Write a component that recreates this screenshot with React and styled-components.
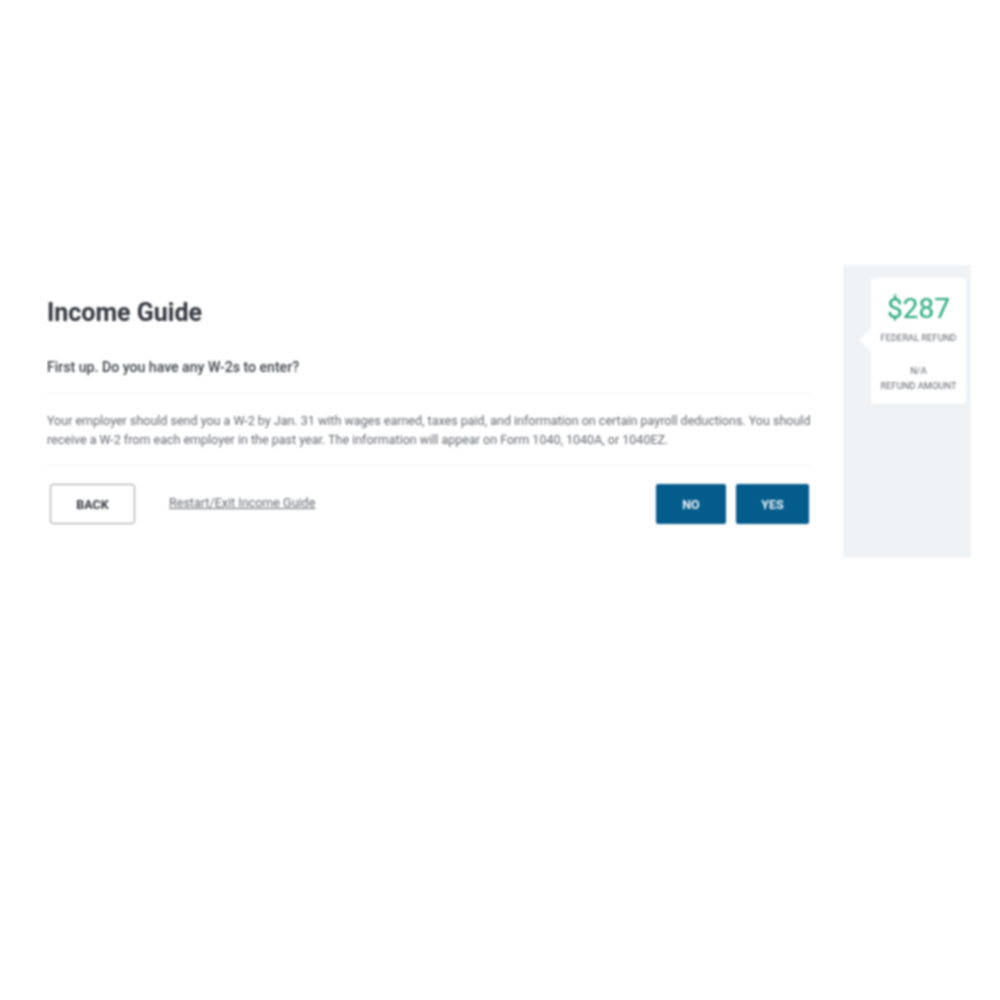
import React from "react";
import styled, { createGlobalStyle } from "styled-components";

const Global = createGlobalStyle`
  html, body { margin: 0; padding: 0; background: #fff; }
  body { font-family: Roboto, "Liberation Sans", sans-serif; }
`;
const Page = styled.div`
  width: 1000px;
  height: 1000px;
  padding: 265px 29px 0 16px;
  box-sizing: border-box;
  filter: blur(0.8px);
`;
const Panel = styled.div`
  display: flex;
  height: 293px;
`;
const Main = styled.main`
  flex: 1;
  padding: 33px 33px 0 31px;
  min-width: 0;
`;
const Title = styled.h1`
  margin: 0;
  font-size: 25px;
  line-height: 30px;
  font-weight: 700;
  color: #34373f;
`;
const Question = styled.p`
  margin: 29px 0 0;
  font-size: 14.1px;
  line-height: 20px;
  font-weight: 500;
  color: #3e4147;
`;
const Rule = styled.hr`
  border: 0;
  border-top: 1px solid #f2f2f2;
  margin: 0;
`;
const FirstRule = styled(Rule)`
  margin-top: 16px;
`;
const Description = styled.p`
  margin: 17px -6px 16px 0;
  font-size: 12.5px;
  line-height: 19px;
  color: #66686e;
`;
const Actions = styled.div`
  display: flex;
  align-items: center;
  margin-top: 18px;
  padding: 0 1px 0 3px;
`;
const BackButton = styled.button`
  width: 85px;
  height: 40px;
  box-sizing: border-box;
  background: #fff;
  border: 1.5px solid #9a9c9f;
  border-radius: 3px;
  font: 700 12.5px Roboto, sans-serif;
  color: #34373f;
`;
const ExitLink = styled.a`
  margin: 0 0 3px 34px;
  font-size: 12.55px;
  color: #66686e;
  text-decoration: underline;
`;
const Choices = styled.div`
  margin-left: auto;
  display: flex;
  gap: 10px;
`;
const Choice = styled.button`
  width: ${(p) => p.$width}px;
  height: 40px;
  border: 0;
  border-radius: 2px;
  background: #045c8c;
  color: #eef4f7;
  font: 700 12.5px Roboto, sans-serif;
`;
const Sidebar = styled.aside`
  width: 128px;
  background: #f0f3f5;
  padding: 13px 5px 0 28px;
  box-sizing: border-box;
`;
const RefundCard = styled.div`
  position: relative;
  height: 126px;
  background: #fff;
  border-radius: 3px;
  box-shadow: 0 1px 3px rgba(0, 0, 0, 0.04);
  text-align: center;
  padding-top: 14px;
  box-sizing: border-box;
  &::before {
    content: "";
    position: absolute;
    left: -8px;
    top: 54px;
    width: 16px;
    height: 16px;
    background: #fff;
    transform: rotate(45deg);
  }
`;
const Amount = styled.div`
  position: relative;
  font-size: 28px;
  line-height: 34px;
  color: #1fa678;
`;
const Label = styled.div`
  position: relative;
  font-size: 9.3px;
  line-height: 15px;
  color: #606268;
`;
const FederalLabel = styled(Label)`
  margin-top: 4px;
`;
const SecondBlock = styled.div`
  margin-top: 18px;
`;

export default function App() {
  return (
    <Page>
      <Global />
      <Panel>
        <Main>
          <Title>Income Guide</Title>
          <Question>First up. Do you have any W-2s to enter?</Question>
          <FirstRule />
          <Description>
            Your employer should send you a W-2 by Jan. 31 with wages earned, taxes paid, and information on certain payroll deductions. You should receive a W-2 from each employer in the past year. The information will appear on Form 1040, 1040A, or 1040EZ.
          </Description>
          <Rule />
          <Actions>
            <BackButton>BACK</BackButton>
            <ExitLink>Restart/Exit Income Guide</ExitLink>
            <Choices>
              <Choice $width={70}>NO</Choice>
              <Choice $width={73}>YES</Choice>
            </Choices>
          </Actions>
        </Main>
        <Sidebar>
          <RefundCard>
            <Amount>$287</Amount>
            <FederalLabel>FEDERAL REFUND</FederalLabel>
            <SecondBlock>
              <Label>N/A</Label>
              <Label>REFUND AMOUNT</Label>
            </SecondBlock>
          </RefundCard>
        </Sidebar>
      </Panel>
    </Page>
  );
}
